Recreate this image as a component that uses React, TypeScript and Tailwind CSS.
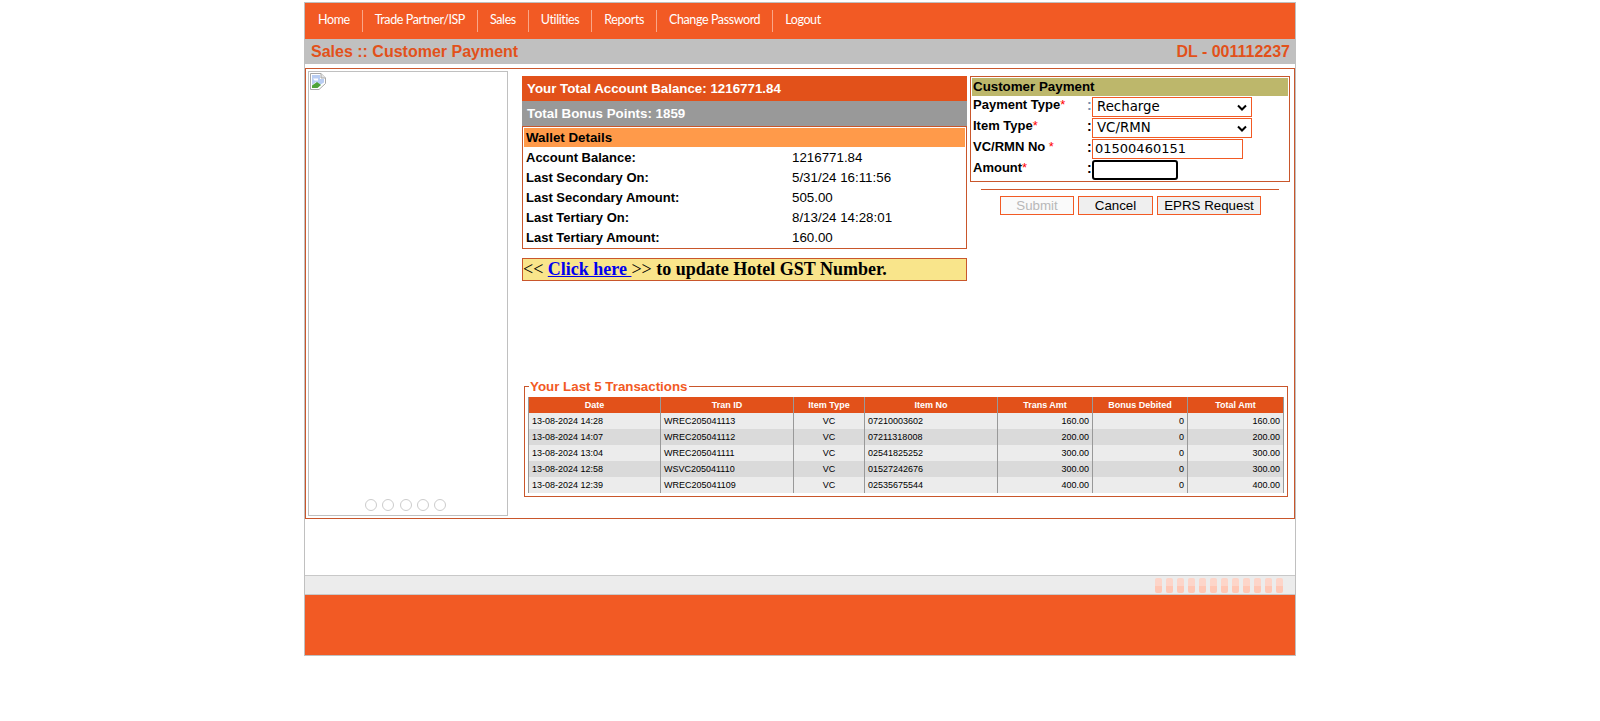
import React from 'react'

const navItems = ['Home', 'Trade Partner/ISP', 'Sales', 'Utilities', 'Reports', 'Change Password', 'Logout']

const walletRows = [
  ['Account Balance:', '1216771.84'],
  ['Last Secondary On:', '5/31/24 16:11:56'],
  ['Last Secondary Amount:', '505.00'],
  ['Last Tertiary On:', '8/13/24 14:28:01'],
  ['Last Tertiary Amount:', '160.00'],
]

const headers = ['Date', 'Tran ID', 'Item Type', 'Item No', 'Trans Amt', 'Bonus Debited', 'Total Amt']

const transactions = [
  ['13-08-2024 14:28', 'WREC205041113', 'VC', '07210003602', '160.00', '0', '160.00'],
  ['13-08-2024 14:07', 'WREC205041112', 'VC', '07211318008', '200.00', '0', '200.00'],
  ['13-08-2024 13:04', 'WREC205041111', 'VC', '02541825252', '300.00', '0', '300.00'],
  ['13-08-2024 12:58', 'WSVC205041110', 'VC', '01527242676', '300.00', '0', '300.00'],
  ['13-08-2024 12:39', 'WREC205041109', 'VC', '02535675544', '400.00', '0', '400.00'],
]

const colWidths = ['w-[132px]', 'w-[133px]', 'w-[71px]', 'w-[133px]', 'w-[95px]', 'w-[95px]', 'w-[96px]']
const cellAlign = ['text-left', 'text-left', 'text-center', 'text-left', 'text-right', 'text-right', 'text-right']

function BrokenImage() {
  return (
    <svg width="16" height="17" viewBox="0 0 16 17" className="block">
      <path d="M0.5 0.5H11L15.5 5V10.5L9 16.5H0.5Z" fill="#fff" stroke="#a8a8a8" />
      <path d="M11 0.5V5H15.5" fill="#e4e4e4" stroke="#a8a8a8" />
      <path d="M2 2H10V6H14V9.5L9 12.5L6 9L2 12Z" fill="#b9cdf2" />
      <path d="M3 5.5H8V7.5H4.5Z" fill="#fff" />
      <path d="M2 15V12.5L7 9L11 12L7.5 15Z" fill="#4fa33a" />
    </svg>
  )
}

function ChevronIcon() {
  return (
    <svg width="10" height="7" viewBox="0 0 10 7" className="shrink-0">
      <path d="M1 1.5L5 5.5L9 1.5" fill="none" stroke="#000" strokeWidth="2" />
    </svg>
  )
}

function FormLabel({ text, space }: { text: string; space?: boolean }) {
  return (
    <div className="w-[115px] pl-[1px] pt-[1px] text-[13px] font-bold leading-[16px] text-black">
      {text}
      {space ? ' ' : ''}
      <span className="font-normal text-[#f00]">*</span>
    </div>
  )
}

export default function App() {
  return (
    <div className="min-h-[721px] bg-white pt-[2px] font-['Liberation_Sans',Arial,sans-serif]">
      <div className="mx-auto w-[992px] border border-[#c0c0c0]">
        <nav className="flex h-[36px] items-center bg-[#f25a24] pl-[1px] font-['Lato',sans-serif] text-[12.5px] tracking-[-0.4px] text-white">
          {navItems.map((item, i) => (
            <div
              key={item}
              className={`flex h-[22px] items-center px-[12px] pb-[1px] ${i < navItems.length - 1 ? 'border-r border-[#f9a688]' : ''}`}
            >
              {item}
            </div>
          ))}
        </nav>

        <div className="flex h-[25px] items-center justify-between bg-[#c0c0c0] pl-[6px] pr-[5px] text-[16px] font-bold text-[#e2511a]">
          <span>Sales :: Customer Payment</span>
          <span>DL - 001112237</span>
        </div>

        <div className="mt-[4px] flex h-[451px] border border-[#c9562b] p-[2px]">
          <div className="relative h-[445px] w-[200px] shrink-0 border border-[#c0c0c0] pl-[1px] pt-[1px]">
            <BrokenImage />
            <div className="absolute bottom-[4px] left-[56px] flex gap-[5.3px]">
              {[0, 1, 2, 3, 4].map((n) => (
                <span key={n} className="h-[12px] w-[12px] rounded-full border border-[#cccccc]" />
              ))}
            </div>
          </div>

          <div className="ml-[14px] flex min-w-0 flex-1 flex-col">
            <div className="mt-[5px] flex items-start">
              <div className="w-[445px] shrink-0">
                <div className="flex h-[25px] items-center bg-[#e2511a] pl-[5px] text-[13.33px] font-bold text-white">
                  Your Total Account Balance: 1216771.84
                </div>
                <div className="flex h-[25px] items-center bg-[#999999] pl-[5px] text-[13.33px] font-bold text-white">
                  Total Bonus Points: 1859
                </div>
                <div className="h-[123px] border border-[#c9562b] p-[1px]">
                  <div className="flex h-[19px] items-center bg-[#ff9a4a] pl-[2px] text-[13.33px] font-bold text-black">
                    Wallet Details
                  </div>
                  {walletRows.map(([label, value]) => (
                    <div key={label} className="flex h-[20px] items-center pt-[1px] text-black">
                      <span className="w-[268px] pl-[2px] text-[13px] font-bold">{label}</span>
                      <span className="text-[13.33px]">{value}</span>
                    </div>
                  ))}
                </div>
                <div className="mt-[9px] flex h-[23px] items-center border border-[#c9562b] bg-[#f9e58b] font-['Liberation_Serif',serif] text-[18px] font-bold text-black">
                  <span className="font-normal">&lt;&lt;&nbsp;</span>
                  <a href="#" className="text-[#0000ee] underline">
                    Click here&nbsp;
                  </a>
                  <span className="font-normal">&gt;&gt;&nbsp;</span>
                  <span>to update Hotel GST Number.</span>
                </div>
              </div>

              <div className="ml-[3px] w-[320px] shrink-0">
                <div className="h-[106px] border border-[#c9562b] p-[1px]">
                  <div className="flex h-[18px] items-center bg-[#bdb76b] pl-[1px] text-[13.33px] font-bold text-black">
                    Customer Payment
                  </div>
                  <div className="flex h-[21px]">
                    <FormLabel text="Payment Type" />
                    <span className="w-[4px] text-[14px] font-bold leading-[18px] text-[#6f8fb0]">:</span>
                    <div className="ml-[1px] mt-[1px] flex h-[20px] w-[160px] items-center border border-[#f25a24] pl-[4px] pr-[4px] font-['DejaVu_Sans',sans-serif] text-[13.33px] text-black">
                      <span className="flex-1">Recharge</span>
                      <ChevronIcon />
                    </div>
                  </div>
                  <div className="flex h-[21px]">
                    <FormLabel text="Item Type" />
                    <span className="w-[4px] text-[14px] font-bold leading-[18px] text-black">:</span>
                    <div className="ml-[1px] mt-[1px] flex h-[20px] w-[160px] items-center border border-[#f25a24] pl-[4px] pr-[4px] font-['DejaVu_Sans',sans-serif] text-[13.33px] text-black">
                      <span className="flex-1">VC/RMN</span>
                      <ChevronIcon />
                    </div>
                  </div>
                  <div className="flex h-[21px]">
                    <FormLabel text="VC/RMN No" space />
                    <span className="w-[4px] text-[14px] font-bold leading-[18px] text-black">:</span>
                    <div className="ml-[1px] mt-[1px] flex h-[20px] w-[151px] items-center border border-[#f25a24] pl-[2px] font-['DejaVu_Sans',sans-serif] text-[13px] text-black">
                      01500460151
                    </div>
                  </div>
                  <div className="flex h-[21px]">
                    <FormLabel text="Amount" />
                    <span className="w-[4px] text-[14px] font-bold leading-[18px] text-black">:</span>
                    <div className="ml-[1px] mt-[1px] h-[20px] w-[86px] rounded-[3px] border-2 border-black bg-white" />
                  </div>
                </div>
                <div className="ml-[11px] mt-[7px] h-px w-[298px] bg-[#d0562a]" />
                <div className="ml-[30px] mt-[6px] flex gap-[4px] text-[13.33px]">
                  <div className="flex h-[19px] w-[74px] items-center justify-center border border-[#f25a24] bg-[#fafafa] text-[#b8b8b8]">
                    Submit
                  </div>
                  <div className="flex h-[19px] w-[75px] items-center justify-center border border-[#f25a24] bg-[#efefef] text-black">
                    Cancel
                  </div>
                  <div className="flex h-[19px] w-[104px] items-center justify-center border border-[#f25a24] bg-[#efefef] text-black">
                    EPRS Request
                  </div>
                </div>
              </div>
            </div>

            <fieldset className="ml-[2px] mt-[96px] h-[120px] w-[764px] border border-[#c9562b] px-[3px]">
              <legend className="ml-[1px] px-[1px] pt-[2px] text-[13.33px] font-bold leading-[16px] text-[#f25a24]">
                Your Last 5 Transactions
              </legend>
              <table className="mt-[2px] w-[755px] table-fixed border-collapse text-[9px] leading-[16px] text-black">
                <thead>
                  <tr className="h-[16px] bg-[#e2511a] text-white">
                    {headers.map((h, i) => (
                      <th key={h} className={`${colWidths[i]} border-x border-[#999999] p-0 text-center font-bold`}>
                        {h}
                      </th>
                    ))}
                  </tr>
                </thead>
                <tbody>
                  {transactions.map((row, r) => (
                    <tr key={row[1]} className={`h-[16px] ${r % 2 === 0 ? 'bg-[#ececec]' : 'bg-[#dadada]'}`}>
                      {row.map((cell, c) => (
                        <td key={c} className={`border-x border-[#999999] px-[3px] py-0 ${cellAlign[c]}`}>
                          {cell}
                        </td>
                      ))}
                    </tr>
                  ))}
                </tbody>
              </table>
            </fieldset>
          </div>
        </div>

        <div className="mt-[56px] flex h-[20px] items-center justify-end gap-[4px] border-y border-[#c8c8c8] bg-[#ececec] pr-[12px]">
          {Array.from({ length: 12 }).map((_, i) => (
            <span key={i} className="flex h-[15px] w-[7px] flex-col overflow-hidden rounded-[2px]">
              <span className="h-[8px] bg-[#fdd5c9]" />
              <span className="h-[7px] bg-[#ffc7b5]" />
            </span>
          ))}
        </div>
        <div className="h-[60px] bg-[#f25a24]" />
      </div>
    </div>
  )
}
